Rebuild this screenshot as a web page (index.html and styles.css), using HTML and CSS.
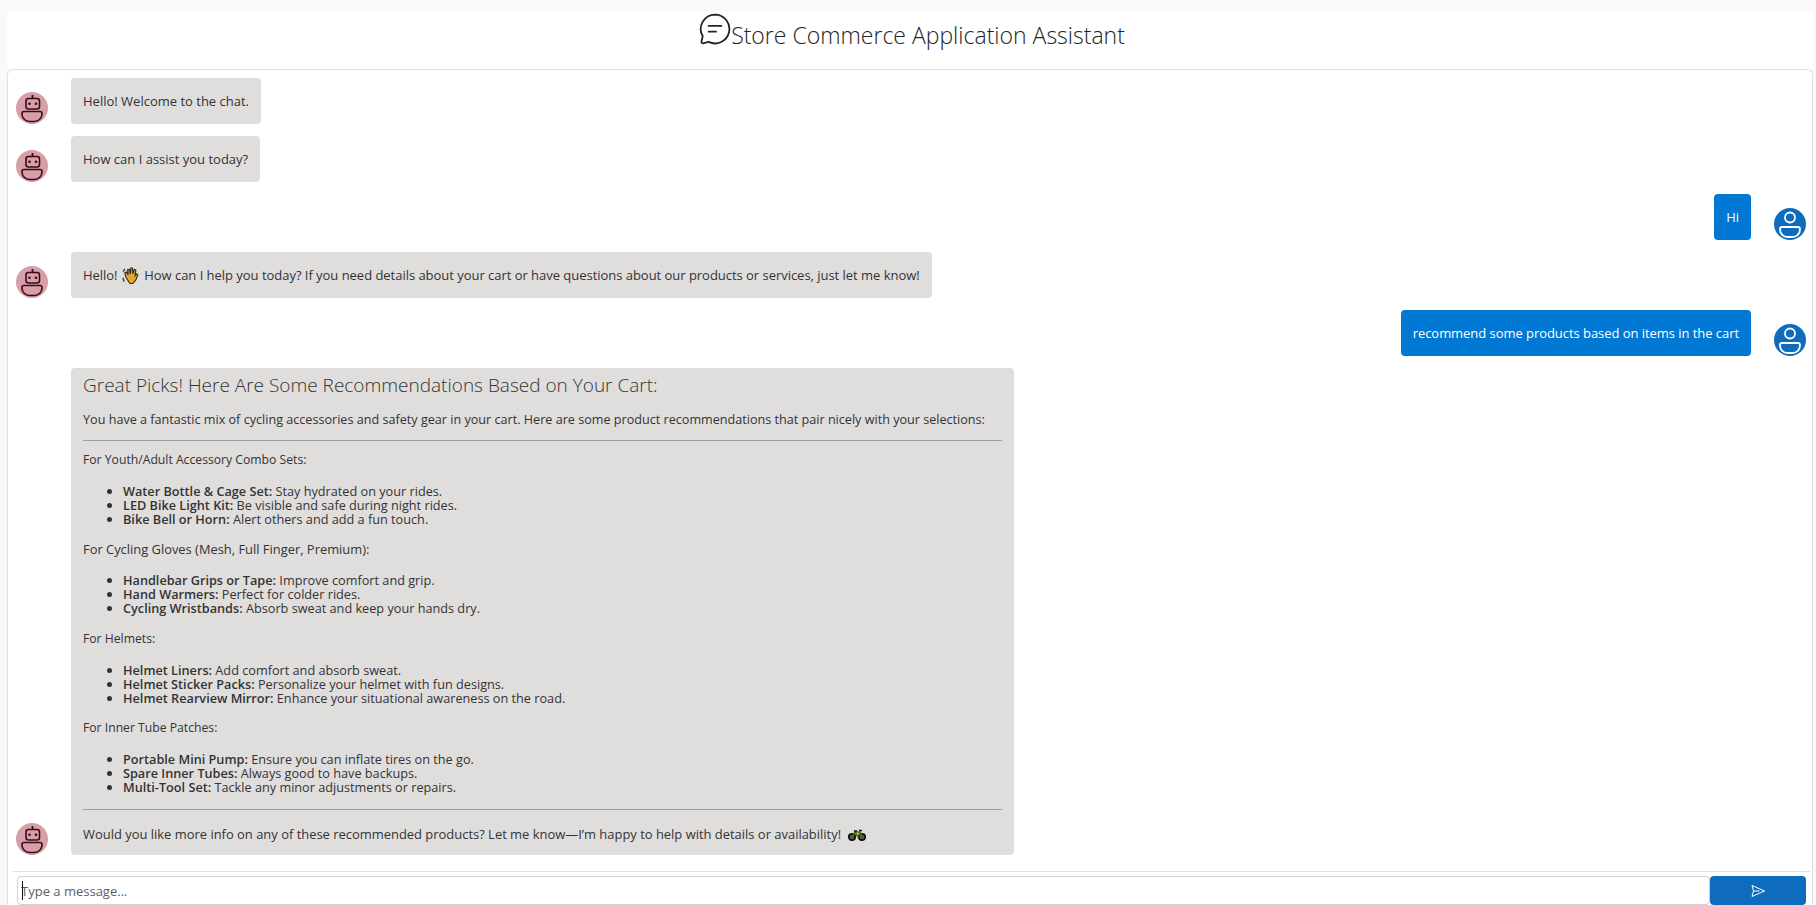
FILE: index.html
```html
<!DOCTYPE html>
<html lang="en">
<head>
<meta charset="utf-8">
<title>Store Commerce Application Assistant</title>
<link rel="stylesheet" href="styles.css">
</head>
<body>
<svg class="defs" width="0" height="0" aria-hidden="true">
  <symbol id="bot" viewBox="0 0 32 32">
    <circle cx="16" cy="16" r="16" fill="#d69fa9"/>
    <path d="M16.500 3v3" fill="none" stroke="#3b0a14" stroke-width="1.800"/>
    <rect x="10" y="6.500" width="13.500" height="10.500" rx="2.500" fill="none" stroke="#3b0a14" stroke-width="1.600"/>
    <circle cx="13.500" cy="11.800" r="1.300" fill="#3b0a14"/><circle cx="20" cy="11.800" r="1.300" fill="#3b0a14"/>
    <path d="M8 19.500h16a2 2 0 0 1 2 2v.5a7.500 7.500 0 0 1-7.500 7.500h-5A7.500 7.500 0 0 1 6 22v-.5a2 2 0 0 1 2-2z" fill="none" stroke="#3b0a14" stroke-width="1.600"/>
  </symbol>
  <symbol id="user" viewBox="0 0 32 32">
    <circle cx="16" cy="16" r="16" fill="#0f6cbd"/>
    <circle cx="16" cy="9.500" r="5" fill="none" stroke="#fff" stroke-width="1.800"/>
    <path d="M8 19h16a2 2 0 0 1 2 2v.5a7.500 7.500 0 0 1-7.500 7.500h-5A7.500 7.500 0 0 1 6 21.500V21a2 2 0 0 1 2-2z" fill="none" stroke="#fff" stroke-width="1.800"/>
  </symbol>
</svg>
<div class="app">
  <header class="header">
    <svg class="chat-icon" viewBox="0 0 30 30"><path d="M15 1.500a13.500 13.500 0 1 1-6 25.600l-5.300 1.300a1.200 1.200 0 0 1-1.400-1.400L3.500 21.800A13.500 13.500 0 0 1 15 1.500z" fill="none" stroke="#242424" stroke-width="1.700" stroke-linejoin="round"/><path d="M9 12h12M9 17.500h7" fill="none" stroke="#242424" stroke-width="1.700" stroke-linecap="round"/></svg>
    <h1 class="title">Store Commerce Application Assistant</h1>
  </header>
  <main class="panel">
    <div class="messages">
      <div class="row"><svg class="avatar"><use href="#bot"/></svg><div class="bubble bot">Hello! Welcome to the chat.</div></div>
      <div class="row"><svg class="avatar"><use href="#bot"/></svg><div class="bubble bot">How can I assist you today?</div></div>
      <div class="row mine"><div class="bubble me">Hi</div><svg class="avatar"><use href="#user"/></svg></div>
      <div class="row"><svg class="avatar"><use href="#bot"/></svg><div class="bubble bot tight">Hello! <svg class="emoji" viewBox="0 0 16 16"><path d="M3.500 10 2.500 6l1.500-.6L5.500 8 5 3.200 6.500 3l1 4 .3-5.200h1.500l.4 5.200 1.200-4 1.400.5-.6 5 1.300-1.600 1.100.8-1.800 4.800-2.600 3H7z" fill="#e8a72a" stroke="#2b2b2b" stroke-width="1"/><path d="M.8 10.500l1 3.500M2.500 2.500 1 5" stroke="#1f4e79" stroke-width="1.300"/></svg> How can I help you today? If you need details about your cart or have questions about our products or services, just let me know!</div></div>
      <div class="row mine"><div class="bubble me">recommend some products based on items in the cart</div><svg class="avatar"><use href="#user"/></svg></div>
      <div class="row"><svg class="avatar"><use href="#bot"/></svg>
        <div class="bubble bot rich">
          <h3 class="rich-title">Great Picks! Here Are Some Recommendations Based on Your Cart:</h3>
          <p class="intro">You have a fantastic mix of cycling accessories and safety gear in your cart. Here are some product recommendations that pair nicely with your selections:</p>
          <hr class="rule-top">
          <p>For Youth/Adult Accessory Combo Sets:</p>
          <ul>
            <li><strong>Water Bottle &amp; Cage Set:</strong> Stay hydrated on your rides.</li>
            <li><strong>LED Bike Light Kit:</strong> Be visible and safe during night rides.</li>
            <li><strong>Bike Bell or Horn:</strong> Alert others and add a fun touch.</li>
          </ul>
          <p class="wide">For Cycling Gloves (Mesh, Full Finger, Premium):</p>
          <ul>
            <li><strong>Handlebar Grips or Tape:</strong> Improve comfort and grip.</li>
            <li><strong>Hand Warmers:</strong> Perfect for colder rides.</li>
            <li><strong>Cycling Wristbands:</strong> Absorb sweat and keep your hands dry.</li>
          </ul>
          <p>For Helmets:</p>
          <ul>
            <li><strong>Helmet Liners:</strong> Add comfort and absorb sweat.</li>
            <li><strong>Helmet Sticker Packs:</strong> Personalize your helmet with fun designs.</li>
            <li><strong>Helmet Rearview Mirror:</strong> Enhance your situational awareness on the road.</li>
          </ul>
          <p>For Inner Tube Patches:</p>
          <ul>
            <li><strong>Portable Mini Pump:</strong> Ensure you can inflate tires on the go.</li>
            <li><strong>Spare Inner Tubes:</strong> Always good to have backups.</li>
            <li><strong>Multi-Tool Set:</strong> Tackle any minor adjustments or repairs.</li>
          </ul>
          <hr class="rule-bottom">
          <p class="closing">Would you like more info on any of these recommended products? Let me know—I’m happy to help with details or availability! <svg class="emoji bike" viewBox="0 0 18 12"><circle cx="4" cy="8" r="3.200" fill="#555" stroke="#111" stroke-width="1.700"/><circle cx="14" cy="8" r="3.200" fill="#555" stroke="#111" stroke-width="1.700"/><path d="M4 8l3-5h5l2 5M7 3l3 5 2-5" fill="none" stroke="#4f6a18" stroke-width="1.600"/><path d="M6 2h3M11 1.500h3" stroke="#111" stroke-width="1.300"/></svg></p>
        </div>
      </div>
    </div>
    <div class="composer">
      <div class="input-wrap"><input class="input" type="text" placeholder="Type a message..."></div>
      <button class="send" type="button" aria-label="Send"><svg viewBox="0 0 16 16" width="16" height="16"><path d="M2 2.500 14.500 8 2 13.500l1.500-5.500zM3.500 8h6" fill="none" stroke="#fff" stroke-width="1" stroke-linejoin="round"/></svg></button>
    </div>
  </main>
</div>
</body>
</html>
```
FILE: styles.css
```css
* { box-sizing: border-box; }
html, body { height: 100%; }
body {
  margin: 0;
  background: #faf9f8;
  color: #242424;
  font-family: "Open Sans", "Noto Sans", "Liberation Sans", sans-serif;
  font-size: 13px;
  overflow: hidden;
}
.defs { display: block; height: 0; }
.app {
  height: 905px;
  padding: 11px 3px 0 7px;
  display: flex;
  flex-direction: column;
}
.header {
  height: 58px;
  flex: none;
  background: #fff;
  display: flex;
  justify-content: center;
  align-items: flex-start;
  padding-left: 4px;
}
.chat-icon { width: 32px; height: 32px; flex: none; margin-top: 2px; }
.title {
  margin: 8px 0 0;
  font-size: 23px;
  line-height: 32px;
  font-weight: 300;
  color: #242424;
}
.panel {
  flex: 1;
  min-height: 0;
  background: #fff;
  border: 1px solid #e0e0e0;
  border-bottom: 0;
  border-radius: 6px 6px 0 0;
  display: flex;
  flex-direction: column;
}
.messages {
  flex: 1;
  min-height: 0;
  padding: 8px 6px 0 8px;
  display: flex;
  flex-direction: column;
  gap: 12px;
}
.row { display: flex; align-items: flex-end; gap: 23px; }
.row.mine { justify-content: flex-end; }
.avatar { width: 32px; height: 32px; flex: none; }
.bubble {
  padding: 12px;
  line-height: 22px;
  border-radius: 4px;
  min-height: 46px;
  white-space: nowrap;
  color: #333;
}
.bot { background: #e0dedd; }
.tight { letter-spacing: -0.03px; }
.bubble.me { background: #0078d4; color: #fff; letter-spacing: -0.05px; }
.emoji { width: 18px; height: 18px; vertical-align: -4px; margin: 0 1px; }
.emoji.bike { width: 18px; height: 12px; vertical-align: -2px; margin: 0 0 0 4px; }
.rich {
  width: 943px;
  padding: 0 12px 11px;
  font-size: 12.200px;
  line-height: 14px;
  white-space: normal;
  flex: none;
}
.rich-title { margin: 0; padding-top: 3px; font-size: 19px; line-height: 28px; font-weight: 300; }
.rich p { margin: 0; line-height: 18.600px; }
.rich .intro { margin-top: 12px; font-size: 12.620px; }
.rich .wide { font-size: 12.900px; }
.rich .closing { font-size: 12.950px; }
.rich hr { border: 0; border-top: 1px solid #a19f9d; }
.rich .rule-top { margin: 10px 0; }
.rich .rule-bottom { margin: 14px 0 15px; }
.rich ul { margin: 14.500px 0; padding-left: 40px; font-size: 12.700px; }
.rich strong { font-weight: 600; }
.composer {
  flex: none;
  margin: 0 2px 0 5px;
  padding: 4px 4px 0 4px;
  border-top: 1px solid #e0e0e0;
  height: 34px;
  display: flex;
}
.input-wrap { position: relative; flex: 1; min-width: 0; }
.input-wrap::after {
  content: "";
  position: absolute;
  left: 5px;
  top: 5px;
  width: 1px;
  height: 19px;
  background: #111;
}
.input {
  display: block;
  width: 100%;
  height: 29px;
  border: 1px solid #d1d1d1;
  border-radius: 4px;
  padding: 0 3px;
  font: inherit;
  color: #242424;
  background: #fff;
  outline: 0;
}
.input::placeholder { color: #616161; opacity: 1; }
.send {
  width: 96px;
  height: 29px;
  flex: none;
  background: #0f6cbd;
  border: 0;
  border-radius: 4px;
  display: flex;
  align-items: center;
  justify-content: center;
  padding: 0;
}
```
